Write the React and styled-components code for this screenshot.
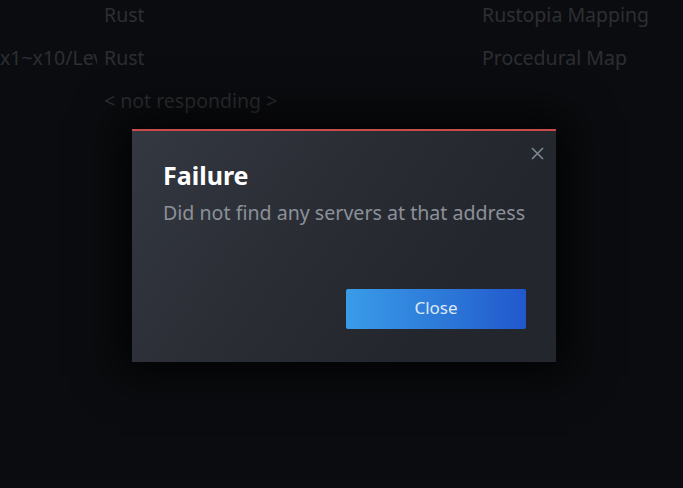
import styled, { createGlobalStyle } from "styled-components";

const GlobalStyle = createGlobalStyle`
	html, body {
		margin: 0;
		padding: 0;
		background: #0b0c0f;
		overflow: hidden;
	}
	body {
		font-family: "Noto Sans", "Open Sans", Arial, sans-serif;
	}
`;

const servers = [
	{ name: "Rust", map: "Rustopia Mapping", label: "" },
	{ name: "Rust", map: "Procedural Map", label: "x1~x10/Levels Rust" },
	{ name: "< not responding >", map: "", label: "" },
];

function App() {
	return (
		<Page>
			<GlobalStyle />

			{/* SERVER LIST BEHIND THE DIALOG */}
			<List>
				{servers.map((server, i) => (
					<Row key={i}>
						<Cell>{server.label}</Cell>
						<Cell>{server.name}</Cell>
						<Cell>{server.map}</Cell>
					</Row>
				))}
			</List>

			{/* FAILURE DIALOG */}
			<Overlay>
				<Dialog>
					<CloseIcon aria-label="Close">
						<svg width="13" height="13" viewBox="0 0 13 13">
							<path d="M1 1 L12 12 M12 1 L1 12" stroke="#7c8892" strokeWidth="1.6" fill="none" />
						</svg>
					</CloseIcon>
					<Title>Failure</Title>
					<Message>Did not find any servers at that address</Message>
					<Footer>
						<CloseButton>Close</CloseButton>
					</Footer>
				</Dialog>
			</Overlay>
		</Page>
	);
}

export default App;

const Page = styled.div`
	position: relative;
	width: 683px;
	height: 488px;
	overflow: hidden;
	background: #0b0c0f;
`;

const List = styled.div`
	display: flex;
	flex-direction: column;
	margin-top: -7px;
`;

const Row = styled.div`
	display: grid;
	grid-template-columns: 97px 371px 1fr;
	column-gap: 7px;
	align-items: center;
	height: 43px;
	font-size: 19.5px;
	color: #2c2f33;
`;

const Cell = styled.div`
	white-space: nowrap;
	overflow: hidden;
`;

const Overlay = styled.div`
	position: absolute;
	inset: 0;
	display: flex;
	align-items: center;
	justify-content: center;
	padding-left: 5px;
	padding-top: 3px;
`;

const Dialog = styled.div`
	position: relative;
	box-sizing: border-box;
	width: 424px;
	height: 233px;
	border-top: 2px solid #c84a4a;
	background: linear-gradient(125deg, #343841 0%, #2a2d34 40%, #23262d 75%, #23262d 100%);
	box-shadow: 0 0 40px 14px rgba(0, 0, 0, 0.75);
	padding: 28px 31px 0;
	display: flex;
	flex-direction: column;
`;

const CloseIcon = styled.div`
	position: absolute;
	top: 16px;
	right: 12px;
	width: 13px;
	height: 13px;
	display: flex;
`;

const Title = styled.div`
	font-size: 25px;
	font-weight: 700;
	color: #ffffff;
	line-height: 32px;
`;

const Message = styled.div`
	margin-top: 9px;
	font-size: 19.6px;
	color: #8b9199;
	line-height: 26px;
	white-space: nowrap;
`;

const Footer = styled.div`
	margin-top: auto;
	margin-bottom: 33px;
	display: flex;
	justify-content: flex-end;
	margin-right: -1px;
`;

const CloseButton = styled.button`
	width: 180px;
	height: 40px;
	padding: 0 0 3px;
	border: none;
	border-radius: 2px;
	background: linear-gradient(90deg, #3a9ce9 0%, #2c78d8 55%, #2158cc 100%);
	color: #dfe9f7;
	font-family: inherit;
	font-size: 17px;
	cursor: pointer;
`;
